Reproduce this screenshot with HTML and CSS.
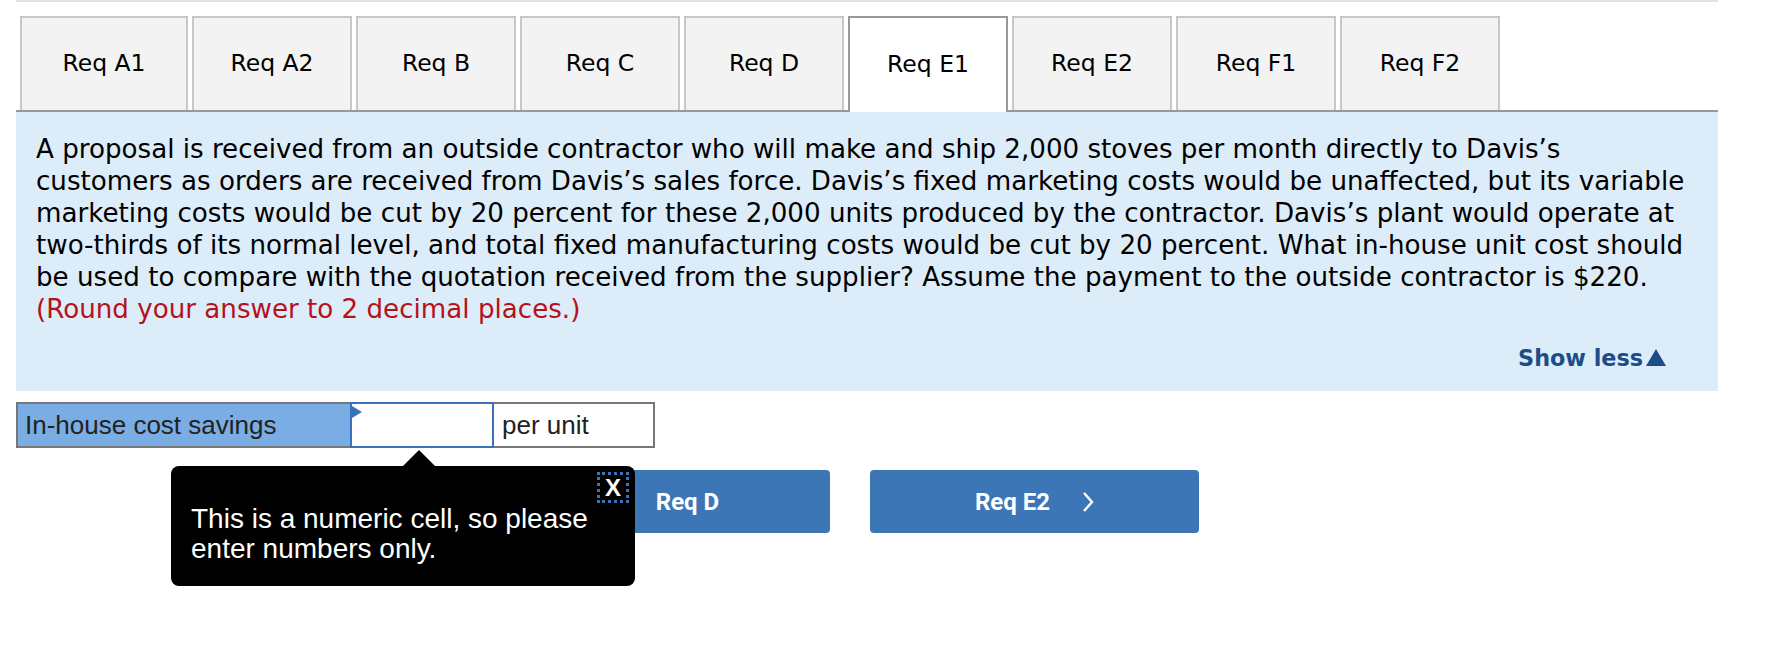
FILE: index.html
```html
<!DOCTYPE html>
<html>
<head>
<meta charset="utf-8">
<link rel="stylesheet" href="styles.css">
</head>
<body>
<div class="page">
  <div class="topline"></div>
  <div class="tabs">
    <div class="tab tab-first">Req A1</div>
    <div class="tab">Req A2</div>
    <div class="tab">Req B</div>
    <div class="tab">Req C</div>
    <div class="tab">Req D</div>
    <div class="tab tab-active">Req E1</div>
    <div class="tab">Req E2</div>
    <div class="tab">Req F1</div>
    <div class="tab">Req F2</div>
  </div>
  <div class="panel">
    <p class="question">A proposal is received from an outside contractor who will make and ship 2,000 stoves per month directly to Davis’s<br>customers as orders are received from Davis’s sales force. Davis’s fixed marketing costs would be unaffected, but its variable<br>marketing costs would be cut by 20 percent for these 2,000 units produced by the contractor. Davis’s plant would operate at<br>two-thirds of its normal level, and total fixed manufacturing costs would be cut by 20 percent. What in-house unit cost should<br>be used to compare with the quotation received from the supplier? Assume the payment to the outside contractor is $220.<br><span class="hint">(Round your answer to 2 decimal places.)</span></p>
    <div class="showless-row"><span class="showless">Show less</span><svg class="tri" width="20" height="17" viewBox="0 0 20 17"><polygon points="10,0 20,17 0,17" fill="#1d4d89"/></svg></div>
  </div>
  <div class="answer-row">
    <div class="cell cell-label">In-house cost savings</div>
    <div class="cell cell-input"><span class="flag"></span></div>
    <div class="cell cell-unit">per unit</div>
    <div class="tooltip">
      <span class="tip-arrow"></span>
      <span class="tip-close">X</span>
      <p class="tip-text">This is a numeric cell, so please<br>enter numbers only.</p>
    </div>
  </div>
  <div class="nav-row">
    <div class="navbtn">
      <svg class="chev" width="12" height="22" viewBox="0 0 12 22"><polyline points="10,2 2,11 10,20" fill="none" stroke="#fff" stroke-width="2.4"/></svg>
      <span>Req D</span>
    </div>
    <div class="navbtn">
      <span>Req E2</span>
      <svg class="chev" width="12" height="22" viewBox="0 0 12 22"><polyline points="2,2 10,11 2,20" fill="none" stroke="#fff" stroke-width="2.4"/></svg>
    </div>
  </div>
</div>
</body>
</html>
```

FILE: styles.css
```css
html, body {
  margin: 0;
  padding: 0;
  background: #fff;
}
.page {
  width: 1702px;
  margin-left: 16px;
  min-height: 660px;
}
.topline {
  height: 2px;
  background: #e1e1e1;
  margin-bottom: 14px;
}
.tabs {
  display: flex;
  gap: 4px;
  padding-left: 4px;
  height: 94px;
  position: relative;
  z-index: 2;
}
.tab {
  box-sizing: border-box;
  width: 160px;
  height: 94px;
  border: 2px solid #c8c8c8;
  border-bottom: none;
  background: #f3f3f3;
  display: flex;
  align-items: center;
  justify-content: center;
  font-family: "DejaVu Sans", Verdana, sans-serif;
  font-size: 23.5px;
  color: #000;
  padding-bottom: 2px;
}
.tab-first {
  width: 168px;
}
.tab-active {
  background: #fff;
  border-color: #999;
  height: 96px;
}
.panel {
  border-top: 2px solid #999;
  background: #dcecf8;
  padding: 21px 20px 18px 20px;
}
.question {
  margin: 0;
  font-family: "DejaVu Sans", Verdana, sans-serif;
  font-size: 26.15px;
  line-height: 32px;
  color: #000;
  white-space: nowrap;
}
.hint {
  color: #b5121b;
}
.showless-row {
  display: flex;
  justify-content: flex-end;
  align-items: center;
  margin-top: 18px;
  padding-right: 32px;
  height: 30px;
}
.showless {
  font-family: "DejaVu Sans", Verdana, sans-serif;
  font-weight: bold;
  font-size: 22.3px;
  line-height: 30px;
  color: #1d4d89;
}
.tri {
  display: block;
  margin-left: 3px;
  margin-top: -1px;
}
.answer-row {
  position: relative;
  display: flex;
  margin-top: 11px;
  height: 46px;
  z-index: 3;
}
.cell {
  box-sizing: border-box;
  height: 46px;
  font-family: "Liberation Sans", Arial, sans-serif;
  font-size: 26px;
  color: #222;
  display: flex;
  align-items: center;
}
.cell-label {
  width: 334px;
  background: #7aade3;
  border: 2px solid #777;
  border-right: none;
  padding-left: 7px;
}
.cell-input {
  width: 144px;
  background: #fff;
  border: 2px solid #3b73b9;
  position: relative;
}
.flag {
  position: absolute;
  left: 0;
  top: 2px;
  width: 0;
  height: 0;
  border-top: 6px solid transparent;
  border-bottom: 6px solid transparent;
  border-left: 10px solid #3b73b9;
}
.cell-unit {
  width: 161px;
  background: #fff;
  border: 2px solid #777;
  border-left: none;
  padding-left: 8px;
}
.tooltip {
  position: absolute;
  left: 155px;
  top: 64px;
  width: 464px;
  height: 120px;
  box-sizing: border-box;
  background: #000;
  border-radius: 8px;
  padding: 38px 20px 0 20px;
}
.tip-arrow {
  position: absolute;
  left: 232px;
  top: -16px;
  width: 0;
  height: 0;
  border-left: 16px solid transparent;
  border-right: 16px solid transparent;
  border-bottom: 16px solid #000;
}
.tip-close {
  position: absolute;
  right: 6px;
  top: 6px;
  width: 32px;
  height: 31px;
  box-sizing: border-box;
  border: 3px dotted #3b73b9;
  color: #fff;
  font-family: "Liberation Sans", Arial, sans-serif;
  font-weight: bold;
  font-size: 24px;
  line-height: 25px;
  text-align: center;
}
.tip-text {
  margin: 0;
  color: #fff;
  font-family: "Liberation Sans", Arial, sans-serif;
  font-size: 28px;
  line-height: 30px;
}
.nav-row {
  display: flex;
  gap: 40px;
  margin-top: 22px;
  padding-left: 485px;
}
.navbtn {
  width: 329px;
  height: 63px;
  border-radius: 4px;
  background: #3c76b7;
  display: flex;
  align-items: center;
  justify-content: center;
  gap: 32px;
  font-family: Roboto, "Liberation Sans", sans-serif;
  font-weight: bold;
  font-size: 24px;
  color: #fff;
}
.chev {
  display: block;
}
```
